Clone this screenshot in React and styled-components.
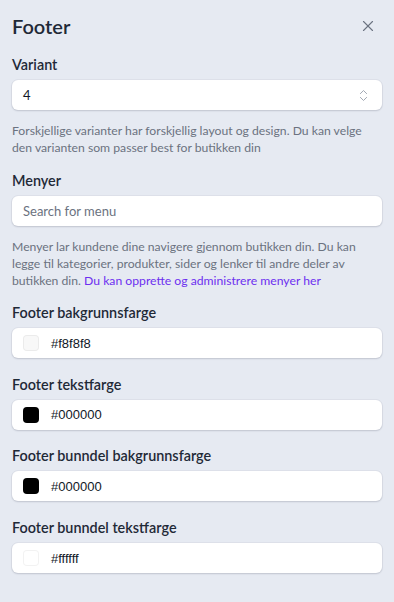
import styled, { createGlobalStyle } from "styled-components";
import { X, ChevronsUpDown } from "lucide-react";

const GlobalStyle = createGlobalStyle`
  html, body {
    margin: 0;
    padding: 0;
    background: #e6eaf2;
  }
  body {
    font-family: Lato, "Noto Sans", sans-serif;
    color: #1f2937;
  }
  * {
    box-sizing: border-box;
  }
`;

const Panel = styled.div`
  width: 394px;
  min-height: 602px;
  padding: 12px 12px 20px;
  background: #e6eaf2;
`;

const Header = styled.div`
  display: flex;
  align-items: center;
  justify-content: space-between;
  height: 28px;
  margin-bottom: 15px;
`;

const Title = styled.h2`
  margin: 0;
  font-size: 20px;
  font-weight: 600;
  color: #1f2937;
  line-height: 28px;
`;

const CloseButton = styled.button`
  display: flex;
  align-items: center;
  justify-content: center;
  width: 24px;
  height: 24px;
  margin-right: 2px;
  padding: 0;
  border: none;
  background: none;
  color: #6b7280;
  cursor: pointer;
`;

const Field = styled.div`
  display: flex;
  flex-direction: column;
  margin-bottom: ${(p) => p.$space || 16}px;
`;

const Label = styled.label`
  font-size: 14.4px;
  font-weight: 600;
  line-height: 20px;
  color: #1f2937;
  margin-bottom: 5px;
`;

const Box = styled.div`
  display: flex;
  align-items: center;
  gap: 12px;
  height: 30px;
  padding: 0 11px;
  background: #fff;
  border-radius: 6px;
  box-shadow: 0 1px 2px rgba(15, 23, 42, 0.14), 0 0 0 1px rgba(15, 23, 42, 0.04);
`;

const Value = styled.span`
  flex: 1;
  font-size: 13px;
  color: ${(p) => (p.$placeholder ? "#6b7280" : "#111827")};
  font-family: ${(p) => (p.$mono ? '"Liberation Sans", Arial, sans-serif' : "inherit")};
`;

const Swatch = styled.span`
  width: 16px;
  height: 16px;
  border-radius: 4px;
  background: ${(p) => p.$color};
  box-shadow: inset 0 0 0 1px rgba(0, 0, 0, 0.05);
`;

const Help = styled.p`
  margin: 12px 0 0;
  font-size: 12.2px;
  line-height: 17px;
  color: #6b7280;
`;

const Link = styled.a`
  color: #6d2ff0;
  text-decoration: none;
`;

const colors = [
  { label: "Footer bakgrunnsfarge", value: "#f8f8f8" },
  { label: "Footer tekstfarge", value: "#000000" },
  { label: "Footer bunndel bakgrunnsfarge", value: "#000000" },
  { label: "Footer bunndel tekstfarge", value: "#ffffff" },
];

function App() {
  return (
    <Panel>
      <GlobalStyle />
      <Header>
        <Title>Footer</Title>
        <CloseButton aria-label="Lukk">
          <X size={18} strokeWidth={1.5} />
        </CloseButton>
      </Header>

      <Field $space={15}>
        <Label>Variant</Label>
        <Box>
          <Value>4</Value>
          <ChevronsUpDown size={15} color="#9ca3af" strokeWidth={1.5} />
        </Box>
        <Help>
          Forskjellige varianter har forskjellig layout og design. Du kan velge
          den varianten som passer best for butikken din
        </Help>
      </Field>

      <Field $space={14}>
        <Label>Menyer</Label>
        <Box>
          <Value $placeholder>Search for menu</Value>
        </Box>
        <Help>
          Menyer lar kundene dine navigere gjennom butikken din. Du kan legge
          til kategorier, produkter, sider og lenker til andre deler av
          butikken din. <Link href="#">Du kan opprette og administrere menyer her</Link>
        </Help>
      </Field>

      {colors.map((c) => (
        <Field key={c.label} $space={16.7}>
          <Label>{c.label}</Label>
          <Box>
            <Swatch $color={c.value} />
            <Value $mono>{c.value}</Value>
          </Box>
        </Field>
      ))}
    </Panel>
  );
}

export default App;
